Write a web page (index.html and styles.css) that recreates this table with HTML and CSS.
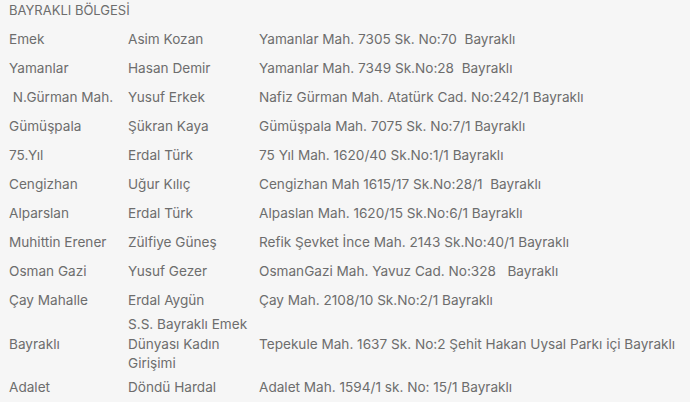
FILE: index.html
```html
<!DOCTYPE html>
<html lang="tr">
<head>
<meta charset="utf-8">
<link rel="stylesheet" href="styles.css">
</head>
<body>
<div class="region">
  <div class="region-title">BAYRAKLI BÖLGESİ</div>
  <table class="list">
    <colgroup>
      <col class="col-area">
      <col class="col-person">
      <col class="col-address">
    </colgroup>
    <tbody>
      <tr><td>Emek</td><td>Asim Kozan</td><td>Yamanlar Mah. 7305 Sk. No:70&nbsp; Bayraklı</td></tr>
      <tr><td>Yamanlar</td><td>Hasan Demir</td><td>Yamanlar Mah. 7349 Sk.No:28&nbsp; Bayraklı</td></tr>
      <tr><td>&nbsp;N.Gürman Mah.</td><td>Yusuf Erkek</td><td>Nafiz Gürman Mah. Atatürk Cad. No:242/1 Bayraklı</td></tr>
      <tr><td>Gümüşpala</td><td>Şükran Kaya</td><td>Gümüşpala Mah. 7075 Sk. No:7/1 Bayraklı</td></tr>
      <tr><td>75.Yıl</td><td>Erdal Türk</td><td>75 Yıl Mah. 1620/40 Sk.No:1/1 Bayraklı</td></tr>
      <tr><td>Cengizhan</td><td>Uğur Kılıç</td><td>Cengizhan Mah 1615/17 Sk.No:28/1&nbsp; Bayraklı</td></tr>
      <tr><td>Alparslan</td><td>Erdal Türk</td><td>Alpaslan Mah. 1620/15 Sk.No:6/1 Bayraklı</td></tr>
      <tr><td>Muhittin Erener</td><td>Zülfiye Güneş</td><td>Refik Şevket İnce Mah. 2143 Sk.No:40/1 Bayraklı</td></tr>
      <tr><td>Osman Gazi</td><td>Yusuf Gezer</td><td>OsmanGazi Mah. Yavuz Cad. No:328&nbsp;&nbsp; Bayraklı</td></tr>
      <tr><td>Çay Mahalle</td><td>Erdal Aygün</td><td>Çay Mah. 2108/10 Sk.No:2/1 Bayraklı</td></tr>
      <tr><td>Bayraklı</td><td class="wrap">S.S. Bayraklı Emek<br>Dünyası Kadın<br>Girişimi</td><td>Tepekule Mah. 1637 Sk. No:2 Şehit Hakan Uysal Parkı içi Bayraklı</td></tr>
      <tr><td>Adalet</td><td>Döndü Hardal</td><td>Adalet Mah. 1594/1 sk. No: 15/1 Bayraklı</td></tr>
    </tbody>
  </table>
</div>
</body>
</html>
```
FILE: styles.css
```css
html, body {
  margin: 0;
  padding: 0;
  background: #f6f6f6;
}

body {
  font-family: "Inter", "Open Sans", sans-serif;
  color: #6d6d6d;
}

.region {
  width: 690px;
}

.region-title {
  font-size: 13px;
  line-height: 16px;
  padding: 2px 9px 0;
  height: 25px;
  box-sizing: border-box;
}

.list {
  width: 690px;
  table-layout: fixed;
  border-collapse: collapse;
  font-size: 13.6px;
  line-height: 19.5px;
}

.col-area { width: 119px; }
.col-person { width: 131px; }
.col-address { width: auto; }

.list td {
  height: 29px;
  padding: 0 0 0 9px;
  vertical-align: middle;
  white-space: nowrap;
}
```
